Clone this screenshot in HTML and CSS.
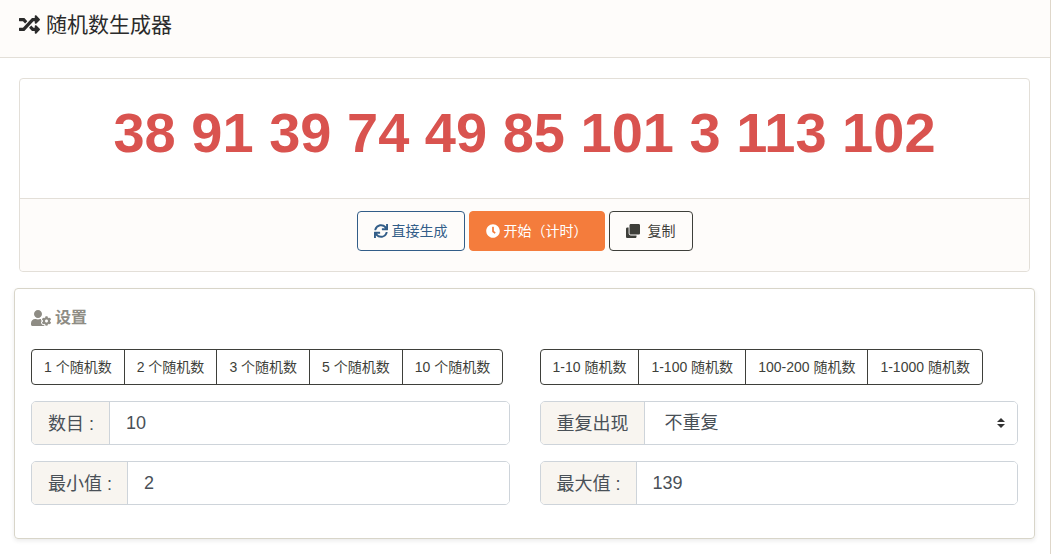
FILE: index.html
```html
<!DOCTYPE html>
<html lang="zh-CN">
<head>
    <meta charset="UTF-8">
    <meta name="viewport" content="width=device-width, initial-scale=1.0">
    <title>随机数生成器</title>
    <link rel="stylesheet" href="styles.css">
</head>
<body>
    <main class="page-card">
        <header class="page-header">
            <svg class="icon" viewBox="0 0 512 512" width="21" height="21" aria-hidden="true"><path d="M504.971 359.029c9.373 9.373 9.373 24.569 0 33.941l-80 79.984c-15.01 15.01-40.971 4.49-40.971-16.971V416h-58.785a12.004 12.004 0 0 1-8.773-3.812l-70.556-75.596 53.333-57.143L352 336h32v-39.981c0-21.438 25.943-31.998 40.971-16.971l80 79.981zM12 176h84l52.781 56.551 53.333-57.143-70.556-75.596A11.999 11.999 0 0 0 122.785 96H12c-6.627 0-12 5.373-12 12v56c0 6.627 5.373 12 12 12zm372 0v39.984c0 21.46 25.961 31.98 40.971 16.971l80-79.984c9.373-9.373 9.373-24.569 0-33.941l-80-79.981C409.943 24.021 384 34.582 384 56.019V96h-58.785a12.004 12.004 0 0 0-8.773 3.812L96 336H12c-6.627 0-12 5.373-12 12v56c0 6.627 5.373 12 12 12h110.785c3.326 0 6.503-1.381 8.773-3.812L352 176h32z"/></svg>
            <h1>随机数生成器</h1>
        </header>

        <section class="result-card">
            <div class="result">38 91 39 74 49 85 101 3 113 102</div>
            <div class="result-footer">
                <button type="button" class="btn btn-primary">
                    <svg class="icon" viewBox="0 0 512 512" width="14" height="14" aria-hidden="true"><path d="M440.65 12.57l4 82.77A247.16 247.16 0 0 0 255.83 8C134.73 8 33.91 94.92 12.29 209.82A12 12 0 0 0 24.09 224h49.05a12 12 0 0 0 11.67-9.26 175.91 175.91 0 0 1 317-56.94l-101.46-4.86a12 12 0 0 0-12.57 12v47.41a12 12 0 0 0 12 12H500a12 12 0 0 0 12-12V12a12 12 0 0 0-12-12h-47.37a12 12 0 0 0-11.98 12.57zM255.83 432a175.61 175.61 0 0 1-146-77.8l101.8 4.87a12 12 0 0 0 12.57-12v-47.4a12 12 0 0 0-12-12H12a12 12 0 0 0-12 12V500a12 12 0 0 0 12 12h47.35a12 12 0 0 0 12-12.6l-4.15-82.57A247.17 247.17 0 0 0 255.83 504c121.11 0 221.93-86.92 243.55-201.82a12 12 0 0 0-11.8-14.18h-49.05a12 12 0 0 0-11.67 9.26A175.86 175.86 0 0 1 255.83 432z"/></svg>
                    <span>直接生成</span>
                </button>
                <button type="button" class="btn btn-start">
                    <svg class="icon" viewBox="0 0 512 512" width="14" height="14" aria-hidden="true"><path d="M256,8C119,8,8,119,8,256S119,504,256,504,504,393,504,256,393,8,256,8Zm92.49,313h0l-20,25a16,16,0,0,1-22.49,2.5h0l-67-49.72a40,40,0,0,1-15-31.23V112a16,16,0,0,1,16-16h32a16,16,0,0,1,16,16V256l58,42.5A16,16,0,0,1,348.49,321Z"/></svg>
                    <span>开始（计时）</span>
                </button>
                <button type="button" class="btn btn-copy">
                    <svg class="icon" viewBox="0 0 512 512" width="14" height="14" aria-hidden="true"><path d="M464 0c26.51 0 48 21.49 48 48v288c0 26.51-21.49 48-48 48H176c-26.51 0-48-21.49-48-48V48c0-26.51 21.49-48 48-48h288M176 416c-44.112 0-80-35.888-80-80V128H48c-26.51 0-48 21.49-48 48v288c0 26.51 21.49 48 48 48h288c26.51 0 48-21.49 48-48v-48H176z"/></svg>
                    <span>复制</span>
                </button>
            </div>
        </section>

        <section class="settings-card">
            <h2>
                <svg class="icon" viewBox="0 0 640 512" width="20" height="16" aria-hidden="true"><path d="M610.5 373.3c2.6-14.1 2.6-28.5 0-42.6l25.8-14.9c3-1.7 4.3-5.2 3.3-8.5-6.7-21.6-18.2-41.2-33.2-57.4-2.3-2.5-6-3.1-9-1.4l-25.8 14.9c-10.9-9.3-23.4-16.5-36.9-21.3v-29.8c0-3.4-2.4-6.4-5.7-7.1-22.3-5-45-4.8-66.2 0-3.3.7-5.7 3.7-5.7 7.1v29.8c-13.5 4.8-26 12-36.9 21.3l-25.8-14.9c-2.9-1.7-6.7-1.1-9 1.4-15 16.2-26.5 35.8-33.2 57.4-1 3.3.4 6.8 3.3 8.5l25.8 14.9c-2.6 14.1-2.6 28.5 0 42.6l-25.8 14.9c-3 1.7-4.3 5.2-3.3 8.5 6.7 21.6 18.2 41.1 33.2 57.4 2.3 2.5 6 3.1 9 1.4l25.8-14.9c10.9 9.3 23.4 16.5 36.9 21.3v29.8c0 3.4 2.4 6.4 5.7 7.1 22.3 5 45 4.8 66.2 0 3.3-.7 5.7-3.7 5.7-7.1v-29.8c13.5-4.8 26-12 36.9-21.3l25.8 14.9c2.9 1.7 6.7 1.1 9-1.4 15-16.2 26.5-35.8 33.2-57.4 1-3.3-.4-6.8-3.3-8.5l-25.8-14.9zM496 400.5c-26.8 0-48.5-21.8-48.5-48.5s21.8-48.5 48.5-48.5 48.5 21.8 48.5 48.5-21.7 48.5-48.5 48.5zM224 256c70.7 0 128-57.3 128-128S294.7 0 224 0 96 57.3 96 128s57.3 128 128 128zm201.2 226.5c-2.3-1.2-4.6-2.6-6.8-3.9l-7.9 4.6c-6 3.4-12.8 5.3-19.6 5.3-10.9 0-21.4-4.6-28.9-12.6-18.3-19.8-32.3-43.9-40.2-69.6-5.5-17.7 1.9-36.4 17.9-45.7l7.9-4.6c-.1-2.6-.1-5.2 0-7.8l-7.9-4.6c-16-9.2-23.4-28-17.9-45.7.9-2.9 2.2-5.8 3.2-8.7-3.8-.3-7.5-1.2-11.4-1.2h-16.7c-22.2 10.2-46.9 16-72.9 16s-50.6-5.8-72.9-16h-16.7C60.2 288 0 348.2 0 422.4V464c0 26.5 21.5 48 48 48h352c10.1 0 19.5-3.2 27.2-8.5-1.2-3.8-2-7.7-2-11.8v-9.2z"/></svg>
                设置
            </h2>
            <form class="settings-grid">
                <div class="btn-group">
                    <button type="button">1 个随机数</button>
                    <button type="button">2 个随机数</button>
                    <button type="button">3 个随机数</button>
                    <button type="button">5 个随机数</button>
                    <button type="button">10 个随机数</button>
                </div>
                <div class="btn-group">
                    <button type="button">1-10 随机数</button>
                    <button type="button">1-100 随机数</button>
                    <button type="button">100-200 随机数</button>
                    <button type="button">1-1000 随机数</button>
                </div>
                <div class="input-group">
                    <label for="count">数目 :</label>
                    <input type="text" id="count" value="10">
                </div>
                <div class="input-group">
                    <label for="repeat">重复出现</label>
                    <select id="repeat">
                        <option selected>不重复</option>
                    </select>
                </div>
                <div class="input-group">
                    <label for="min">最小值 :</label>
                    <input type="text" id="min" value="2">
                </div>
                <div class="input-group">
                    <label for="max">最大值 :</label>
                    <input type="text" id="max" value="139">
                </div>
            </form>
        </section>
    </main>
</body>
</html>
```

FILE: styles.css
```css
* {
    box-sizing: border-box;
}
body {
    margin: 0;
    background-color: #fff;
    color: #3e3f3a;
    font-family: "Liberation Sans", "Noto Sans CJK SC", sans-serif;
    font-size: 14px;
}
button, input, select {
    font-family: inherit;
    margin: 0;
}
.icon {
    fill: currentColor;
    flex: none;
}
.page-card {
    min-height: 100vh;
    padding-bottom: 15px;
    border-right: 1px solid #dfd7ca;
}
.page-header {
    display: flex;
    align-items: center;
    gap: 6px;
    padding: 9px 19px 17px;
    background-color: #fefcfa;
    border-bottom: 1px solid #e3dfd8;
    color: #2b2b2b;
}
.page-header h1 {
    margin: 0;
    font-size: 21px;
    line-height: 31px;
    font-weight: 400;
}
.result-card {
    margin: 20px 20px 16px 19px;
    border: 1px solid #e3dfd8;
    border-radius: 4px;
}
.result {
    padding: 20px 20px 31px;
    color: #d9534f;
    font-size: 56px;
    line-height: 68px;
    font-weight: bold;
    text-align: center;
}
.result-footer {
    display: flex;
    justify-content: center;
    gap: 4px;
    padding: 12px 20px 20px;
    background-color: #fefcfa;
    border-top: 1px solid #e3dfd8;
    border-radius: 0 0 4px 4px;
}
.btn {
    display: flex;
    align-items: center;
    gap: 4px;
    height: 40px;
    padding: 0 16px;
    border: 1px solid;
    border-radius: 4px;
    background-color: transparent;
    font-size: 14px;
    cursor: pointer;
}
.btn span {
    padding-bottom: 2px;
}
.btn-primary {
    border-color: #325d88;
    color: #325d88;
}
.btn-start {
    border-color: #f47c3c;
    background-color: #f47c3c;
    color: #fff;
}
.btn-copy {
    gap: 8px;
    border-color: #3e3f3a;
    color: #3e3f3a;
}
.settings-card {
    margin: 0 15px 0 14px;
    padding: 16px 16px 33px;
    border: 1px solid #d8d5c9;
    border-radius: 4px;
    box-shadow: 0 2px 4px rgba(0, 0, 0, 0.08);
}
.settings-card h2 {
    display: flex;
    align-items: center;
    gap: 4px;
    margin: 0 0 18px;
    color: #8e8c84;
    font-size: 16px;
    line-height: 26px;
    font-weight: bold;
}
.settings-grid {
    display: grid;
    grid-template-columns: 1fr 1fr;
    gap: 16px 30px;
}
.btn-group {
    display: flex;
}
.btn-group button {
    height: 36px;
    padding: 0 12px 2px;
    border: 1px solid #3e3f3a;
    background-color: transparent;
    color: #3e3f3a;
    font-size: 14px;
    white-space: nowrap;
    cursor: pointer;
}
.btn-group button + button {
    margin-left: -1px;
}
.btn-group button:first-child {
    border-radius: 4px 0 0 4px;
}
.btn-group button:last-child {
    border-radius: 0 4px 4px 0;
}
.input-group {
    display: flex;
    height: 44px;
    border: 1px solid #ced4da;
    border-radius: 5px;
    overflow: hidden;
    color: #495057;
    font-size: 18px;
}
.input-group label {
    display: flex;
    align-items: center;
    padding: 0 15px 2px 16px;
    border-right: 1px solid #ced4da;
    background-color: #f8f5f0;
    white-space: nowrap;
}
.input-group input,
.input-group select {
    flex: 1;
    min-width: 0;
    padding: 0 16px;
    border: 0;
    outline: 0;
    background-color: #fff;
    color: inherit;
    font-size: 18px;
}
.input-group select {
    appearance: none;
    padding-left: 20px;
    background: #fff url("data:image/svg+xml,%3Csvg xmlns='http://www.w3.org/2000/svg' viewBox='0 0 4 5'%3E%3Cpath fill='%23333' d='M2 0L0 2h4zm0 5L0 3h4z'/%3E%3C/svg%3E") no-repeat right 12px center / 8px 10px;
}
@media (max-width: 900px) {
    .settings-grid {
        grid-template-columns: 1fr;
    }
    .btn-group {
        overflow-x: auto;
    }
}
```
